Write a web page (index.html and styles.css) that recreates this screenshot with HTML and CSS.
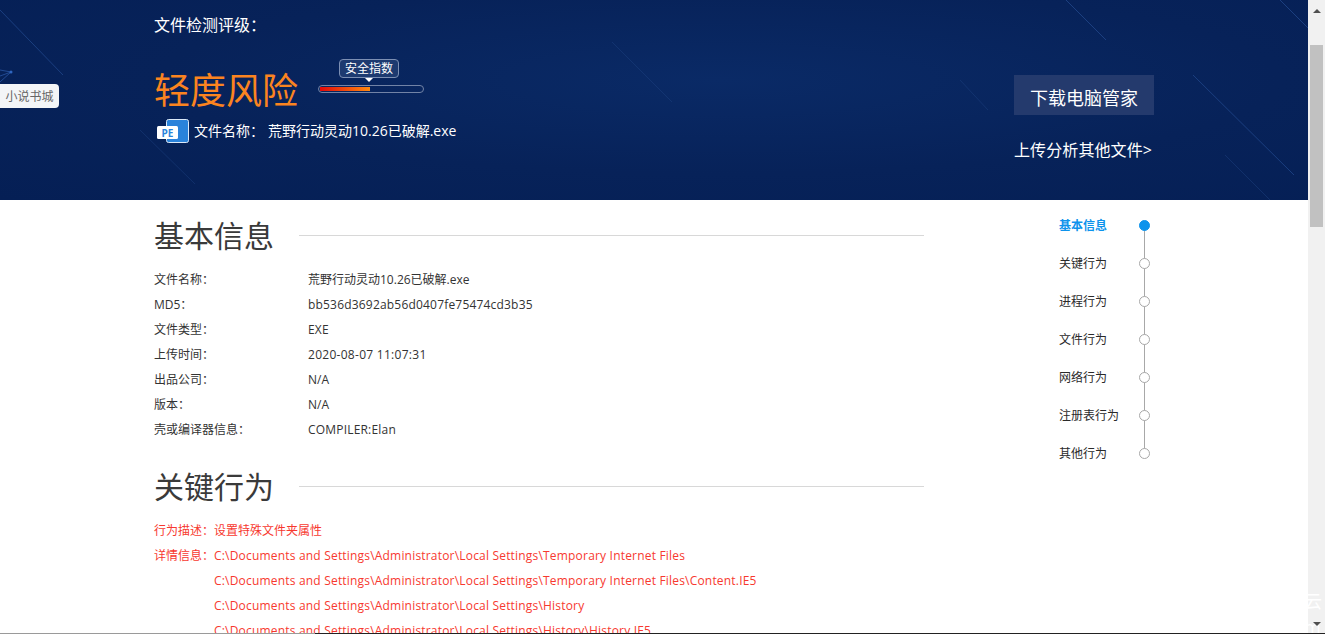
FILE: index.html
```html
<!DOCTYPE html>
<html lang="zh-CN">
<head>
<meta charset="utf-8">
<title>文件检测报告</title>
<link rel="stylesheet" href="styles.css">
</head>
<body>
<div class="page">
  <header class="hero">
    <svg class="hero-lines" width="1308" height="200" viewBox="0 0 1308 200">
      <g stroke="#1b3f80" stroke-width="1" fill="none">
        <path d="M0 10L63 75M1066 0L1106 40M1193 75L1294 175M1280 0L1308 28"/>
        <path d="M140 130L195 184M960 80L988 110M1225 155L1270 200M612 42L672 102" opacity="0.5"/>
        <path d="M0 70L11 72L0 82M0 76L11 72" stroke="#234b94"/>
      </g>
      <circle cx="11" cy="72" r="1.5" fill="#2f66c0"/>
    </svg>
    <div class="hero-inner">
      <div class="hero-left">
        <div class="grade-title">文件检测评级：</div>
        <div class="risk-row">
          <div class="risk">轻度风险</div>
          <div class="gauge">
            <div class="gauge-tag">安全指数</div>
            <div class="gauge-bar"><div class="gauge-fill"></div></div>
          </div>
        </div>
        <div class="file-row">
          <svg class="pe-icon" width="32" height="25" viewBox="0 0 32 25">
            <rect x="9.5" y="0.5" width="22" height="23" rx="2" fill="#2a83db" stroke="#dce9f8"/>
            <rect x="0" y="7" width="21" height="13" rx="1.5" fill="#fff"/>
            <text x="4.5" y="17.5" class="pe-text">PE</text>
          </svg>
          <span class="file-label">文件名称：</span>
          <span class="file-name">荒野行动灵动10.26已破解.exe</span>
        </div>
      </div>
      <div class="hero-right">
        <a class="download">下载电脑管家</a>
        <a class="upload">上传分析其他文件&gt;</a>
      </div>
    </div>
  </header>

  <div class="content">
    <main class="report">
      <section class="section">
        <h2 class="section-title"><span>基本信息</span><i class="rule"></i></h2>
        <dl class="info">
          <div class="info-row"><dt>文件名称：</dt><dd>荒野行动灵动10.26已破解.exe</dd></div>
          <div class="info-row"><dt>MD5：</dt><dd class="latin">bb536d3692ab56d0407fe75474cd3b35</dd></div>
          <div class="info-row"><dt>文件类型：</dt><dd class="latin">EXE</dd></div>
          <div class="info-row"><dt>上传时间：</dt><dd class="latin date">2020-08-07 11:07:31</dd></div>
          <div class="info-row"><dt>出品公司：</dt><dd>N/A</dd></div>
          <div class="info-row"><dt>版本：</dt><dd>N/A</dd></div>
          <div class="info-row"><dt>壳或编译器信息：</dt><dd class="latin">COMPILER:Elan</dd></div>
        </dl>
      </section>
      <section class="section section-key">
        <h2 class="section-title"><span>关键行为</span><i class="rule"></i></h2>
        <dl class="behavior">
          <div class="behavior-row"><dt>行为描述：</dt><dd>设置特殊文件夹属性</dd></div>
          <div class="behavior-row"><dt>详情信息：</dt><dd class="latin">C:\Documents and Settings\Administrator\Local Settings\Temporary Internet Files</dd></div>
          <div class="behavior-row"><dt></dt><dd class="latin">C:\Documents and Settings\Administrator\Local Settings\Temporary Internet Files\Content.IE5</dd></div>
          <div class="behavior-row"><dt></dt><dd class="latin">C:\Documents and Settings\Administrator\Local Settings\History</dd></div>
          <div class="behavior-row"><dt></dt><dd class="latin">C:\Documents and Settings\Administrator\Local Settings\History\History.IE5</dd></div>
        </dl>
      </section>
    </main>
    <nav class="steps">
      <div class="step active"><span class="step-label">基本信息</span><span class="dot"></span></div>
      <div class="step"><span class="step-label">关键行为</span><span class="dot"></span></div>
      <div class="step"><span class="step-label">进程行为</span><span class="dot"></span></div>
      <div class="step"><span class="step-label">文件行为</span><span class="dot"></span></div>
      <div class="step"><span class="step-label">网络行为</span><span class="dot"></span></div>
      <div class="step"><span class="step-label">注册表行为</span><span class="dot"></span></div>
      <div class="step"><span class="step-label">其他行为</span><span class="dot"></span></div>
    </nav>
  </div>
  <div class="side-tab">小说书城</div>
</div>
<aside class="scrollbar">
  <span class="arrow-up"></span>
  <span class="thumb"></span>
  <span class="watermark">云<br>m</span>
  <span class="arrow-down"></span>
</aside>
<div class="bottom-edge"></div>
</body>
</html>
```

FILE: styles.css
```css
* { box-sizing: border-box; }
html, body { margin: 0; height: 634px; overflow: hidden; background: #fff; }
body {
  display: flex;
  width: 1325px;
  position: relative;
  font-family: "Open Sans", "Noto Sans CJK SC", sans-serif;
  font-size: 12px;
  color: #333;
}
.page { width: 1308px; height: 634px; position: relative; overflow: hidden; flex: none; }

/* hero */
.hero {
  height: 200px;
  position: relative;
  background: radial-gradient(ellipse at 55% 40%, #0a2a66 0%, #072259 55%, #051f55 100%);
  color: #fff;
}
.hero-lines { position: absolute; left: 0; top: 0; }
.hero-inner {
  position: relative;
  width: 1000px;
  margin: 0 auto;
  display: flex;
  justify-content: space-between;
}
.hero-left { padding-top: 15px; }
.grade-title { font-size: 16px; line-height: 20px; }
.risk-row { display: flex; margin-top: 24px; }
.risk { font-size: 36px; line-height: 50px; margin-top: 7px; color: #fb8420; }
.gauge { margin-left: 20px; width: 106px; display: flex; flex-direction: column; align-items: flex-start; }
.gauge-tag {
  position: relative;
  width: 60px;
  height: 19px;
  margin-left: 21px;
  line-height: 17px;
  text-align: center;
  border: 1px solid #7c8fb3;
  border-radius: 4px;
  background: #1d3a70;
  white-space: nowrap;
}
.gauge-tag::after {
  content: "";
  position: absolute;
  left: 25px;
  top: 18px;
  border: 4px solid transparent;
  border-top-color: #fff;
  border-bottom: 0;
}
.gauge-bar {
  width: 106px;
  height: 8px;
  margin-top: 7px;
  padding: 1px;
  border: 1px solid #7283a6;
  border-radius: 4px;
}
.gauge-fill { width: 50px; height: 4px; background: linear-gradient(90deg, #e20a0a, #ff8a10); }
.file-row { display: flex; align-items: center; margin-top: 3px; height: 24px; font-size: 14px; margin-left: 3px; }
.pe-icon { flex: none; }
.pe-text { font: 700 10px "Open Sans", sans-serif; fill: #2a83db; }
.file-label { margin: 0 0 2px 5px; width: 74px; }
.file-name { margin-bottom: 2px; white-space: nowrap; }
.hero-right { padding-top: 75px; width: 140px; }
.download {
  display: block;
  height: 40px;
  line-height: 46px;
  text-align: center;
  font-size: 18px;
  background: #243a6d;
}
.upload { display: block; margin-top: 25px; font-size: 16px; line-height: 20px; letter-spacing: 0.1px; white-space: nowrap; }

/* content */
.content { width: 1000px; margin: 0 auto; display: flex; justify-content: space-between; }
.report { width: 770px; padding-top: 15px; }
.section-title {
  display: flex;
  align-items: center;
  height: 40px;
  margin: 0;
  font-size: 30px;
  font-weight: 400;
  color: #3a3a3a;
}
.section-title span { margin-bottom: 2px; }
.rule { flex: 1; height: 1px; margin-left: 25px; background: #d8d8d8; }
.info, .behavior { margin: 12px 0 0; }
.info-row, .behavior-row { display: flex; line-height: 25px; height: 25px; white-space: nowrap; }
dt { flex: none; }
dd { margin: 0; }
.latin { letter-spacing: 0.19px; }
.date { letter-spacing: 0.28px; }
.info-row dt { width: 154px; }
.section-key { margin-top: 24px; }
.behavior-row { color: #f7392f; }
.behavior-row dt { width: 60px; }

/* step nav */
.steps { width: 95px; padding: 6px 4px 0 0; position: relative; }
.steps::before {
  content: "";
  position: absolute;
  right: 9px;
  top: 25px;
  width: 1px;
  height: 228px;
  background: #a8a8a8;
}
.step { display: flex; align-items: center; justify-content: space-between; height: 38px; color: #2a2a2a; position: relative; white-space: nowrap; }
.dot { width: 11px; height: 11px; border: 1px solid #a8a8a8; border-radius: 50%; background: #fff; }
.step-label { margin-bottom: 1px; }
.active { color: #0d93ec; font-weight: 700; }
.active .dot { background: #0d93ec; border-color: #0d93ec; }

/* floating tab */
.side-tab {
  position: absolute;
  left: 0;
  top: 84px;
  width: 59px;
  height: 24px;
  line-height: 26px;
  text-align: center;
  color: #666;
  background: #f3f5f7;
  border-radius: 0 4px 4px 0;
}

/* scrollbar */
.scrollbar { width: 17px; height: 634px; flex: none; position: relative; background: #f1f1f1; }
.thumb { position: absolute; left: 2px; top: 45px; width: 13px; height: 182px; background: #c1c1c1; }
.arrow-up, .arrow-down { position: absolute; left: 5px; border: 4px solid transparent; }
.arrow-up { top: 5px; border-bottom-color: #505050; }
.arrow-down { top: 622px; border-top-color: #505050; }
.watermark { position: absolute; left: -4px; top: 588px; font-size: 18px; line-height: 26px; color: #fff; }
.bottom-edge {
  position: absolute;
  left: 0;
  right: 0;
  bottom: 0;
  height: 1px;
  background: linear-gradient(90deg, #9a9a9a 0, #9a9a9a 315px, #222 315px, #222 100%);
}
```
